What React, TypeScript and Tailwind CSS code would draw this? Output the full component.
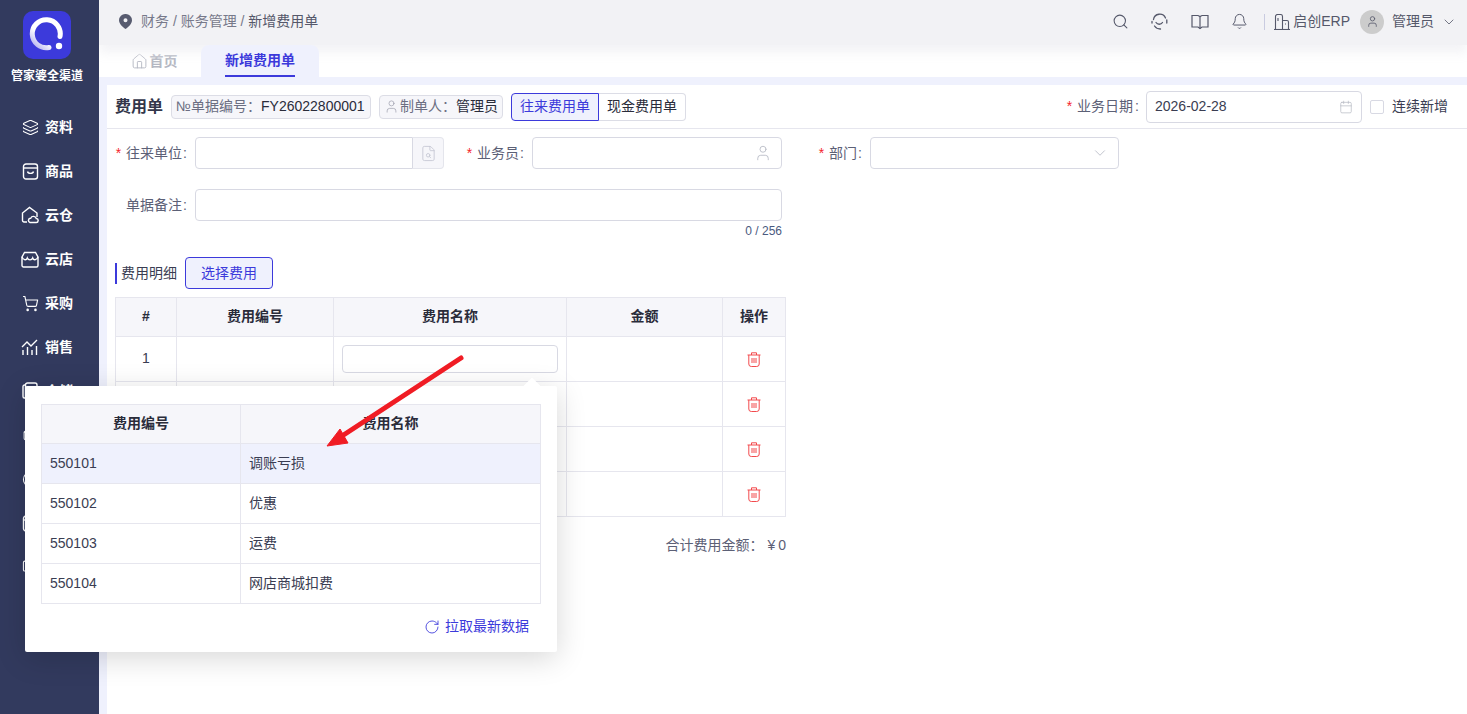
import { ChevronDown, Search, Bell, User, Home, Calendar, Layers, ShoppingCart, RotateCw, FileSearch, Monitor, Package, CircleDot } from "lucide-react";

const font = { fontFamily: '"Liberation Sans", "Noto Sans CJK SC", sans-serif' };

function ShopBag() {
  return (
    <svg width="17" height="17" viewBox="0 0 17 17" fill="none" stroke="currentColor" strokeWidth="1.4">
      <rect x="1.5" y="1" width="14" height="15" rx="2.5" />
      <path d="M1.5 5h14" />
      <path d="M5.5 8.5c.5 2.5 5.500 2.500 6 0" />
    </svg>
  );
}

function CloudHouse() {
  return (
    <svg width="18" height="18" viewBox="0 0 18 18" fill="none" stroke="currentColor" strokeWidth="1.4">
      <path d="M6 16H3a1.500 1.500 0 0 1-1.500-1.500V7L8.500 1.500 16 7v4" />
      <path d="M9 16.500h6a2 2 0 0 0 .3-4 3 3 0 0 0-5.600-.3 2.200 2.200 0 0 0-.7 4.300z" />
    </svg>
  );
}

function Store() {
  return (
    <svg width="18" height="17" viewBox="0 0 18 17" fill="none" stroke="currentColor" strokeWidth="1.4">
      <path d="M3.500 1.500h11L17 6v8.500a1.500 1.500 0 0 1-1.500 1.500h-13A1.500 1.500 0 0 1 1 14.500V6z" />
      <path d="M1 6c1.500 3.500 4.500 3.500 5.300 1 1 2.500 4.400 2.500 5.400 0 .8 2.500 3.800 2.500 5.300-1" />
    </svg>
  );
}

function Chart() {
  return (
    <svg width="18" height="17" viewBox="0 0 18 17" fill="none" stroke="currentColor" strokeWidth="1.4">
      <path d="M1 8l5-5 4 4 6-6" />
      <path d="M2 11v5M6.500 8v8M11 11v5M15.500 7v9" />
    </svg>
  );
}

function Ledger() {
  return (
    <svg width="16" height="18" viewBox="0 0 16 18" fill="none" stroke="currentColor" strokeWidth="1.4">
      <path d="M3 3H2.500A1.500 1.500 0 0 0 1 4.500v10A1.500 1.500 0 0 0 2.500 16H3" />
      <rect x="3.500" y="1" width="11.500" height="16" rx="2" />
      <path d="M3.500 5.500H15" />
    </svg>
  );
}

function Trash() {
  return (
    <svg width="14" height="15" viewBox="0 0 14 15" fill="none" stroke="#f24a4d" strokeWidth="1">
      <path d="M.5 3h13" />
      <path d="M4.500 3V.8h5V3" />
      <path d="M1.800 3v9a2.500 2.500 0 0 0 2.500 2.500h5.400a2.500 2.500 0 0 0 2.500-2.500V3" />
      <path d="M5 6v5M7 6v5M9 6v5" />
    </svg>
  );
}

function Pin() {
  return (
    <svg width="13" height="15" viewBox="0 0 13 15">
      <path fillRule="evenodd" fill="#585c70" d="M6.500 0A6.300 6.300 0 0 1 13 6.300c0 3.500-3.500 6.800-6.500 8.700C3.500 13.100 0 9.800 0 6.300A6.300 6.300 0 0 1 6.500 0zm0 4.300a2 2 0 1 0 0 4 2 2 0 0 0 0-4z" />
    </svg>
  );
}

function ServiceHead() {
  return (
    <svg width="17" height="17" viewBox="0 0 17 17" fill="none" stroke="currentColor" strokeWidth="1.3" strokeLinecap="round">
      <path d="M2.500 6.500A6.300 6.300 0 0 1 14.500 5" />
      <path d="M1 8.500v1.500M15.800 7v3" />
      <path d="M5 9.500c1.500 2.300 5 2.300 6.500 0" />
      <path d="M3.500 13a7 7 0 0 0 6 3" />
    </svg>
  );
}

function OpenBook() {
  return (
    <svg width="18" height="16" viewBox="0 0 18 16" fill="none" stroke="currentColor" strokeWidth="1.2">
      <path d="M1 1.500h6L9 2.500l2-1h6v11.500h-6L9 14.500 7 13H1z" />
      <path d="M9 2.500v12" />
    </svg>
  );
}

function Tower() {
  return (
    <svg width="16" height="16" viewBox="0 0 16 16" fill="none" stroke="currentColor" strokeWidth="1.1">
      <path d="M0 15.500h16" />
      <path d="M1.500 15.500V2.500a2 2 0 0 1 2-2h3a2 2 0 0 1 2 2v13" />
      <path d="M8.500 6.500H13a1.500 1.500 0 0 1 1.500 1.500v7.500" />
      <path d="M4 4v3M11 10h1" />
    </svg>
  );
}

function Logo() {
  return (
    <svg width="36" height="36" viewBox="0 0 36 36" fill="none">
      <defs>
        <linearGradient id="ring" x1="0" y1="1" x2="0.7" y2="0.2">
          <stop offset="0" stopColor="#a9a8ee" />
          <stop offset="0.5" stopColor="#ffffff" />
        </linearGradient>
      </defs>
      <path d="M20 30.500A14 14 0 1 1 31 19.500" stroke="url(#ring)" strokeWidth="5" strokeLinecap="round" />
      <circle cx="30" cy="29" r="3.200" fill="#fff" />
    </svg>
  );
}

const navItems = [
  { label: "资料", icon: <Layers size={17} strokeWidth={1.5} /> },
  { label: "商品", icon: <ShopBag /> },
  { label: "云仓", icon: <CloudHouse /> },
  { label: "云店", icon: <Store /> },
  { label: "采购", icon: <ShoppingCart size={17} strokeWidth={1.6} /> },
  { label: "销售", icon: <Chart /> },
  { label: "仓储", icon: <Ledger /> },
  { label: "生产", icon: <Package size={17} strokeWidth={1.5} /> },
  { label: "财务", icon: <CircleDot size={17} strokeWidth={1.5} /> },
  { label: "报表", icon: <ShopBag /> },
  { label: "系统", icon: <Monitor size={17} strokeWidth={1.5} /> },
];

const expenseRows = [
  ["550101", "调账亏损"],
  ["550102", "优惠"],
  ["550103", "运费"],
  ["550104", "网店商城扣费"],
];

function Label({ text, required, width }: { text: string; required?: boolean; width: string }) {
  return (
    <div className={`${width} h-[32px] shrink-0 flex items-center justify-end pr-[8px] text-[14px] text-[#5c6076]`}>
      {required && <span className="text-[#f5222d] mr-[5px]">*</span>}
      <span>{text}</span>
      <span className="ml-[1px]">:</span>
    </div>
  );
}

export default function App() {
  return (
    <div className="relative flex h-screen w-full overflow-hidden bg-white text-[14px] text-[#3a3d52]" style={font}>
      {/* sidebar */}
      <aside className="relative z-20 w-[99px] shrink-0 bg-[#323a5e] text-white flex flex-col">
        <div className="w-[94px] flex flex-col items-center">
          <div className="mt-[11px] w-[48px] h-[48px] rounded-[10px] bg-[#3c3adb] flex items-center justify-center">
            <Logo />
          </div>
          <div className="mt-[9px] text-[12px] font-bold leading-[16px] whitespace-nowrap">管家婆全渠道</div>
        </div>
        <nav className="mt-[21px] w-full flex flex-col">
          {navItems.map((item) => (
            <div key={item.label} className="h-[44px] flex items-center pl-[21px] gap-[6px] text-[14px] font-bold">
              <span className="w-[18px] flex justify-center">{item.icon}</span>
              <span>{item.label}</span>
            </div>
          ))}
        </nav>
      </aside>

      <div className="flex-1 min-w-0 flex flex-col">
        {/* top bar */}
        <header className="relative z-10 h-[45px] shrink-0 bg-[#f2f2f5] flex items-center pl-[20px] pr-[10px] pb-[2px] shadow-[0_8px_10px_rgba(242,242,245,0.9)]">
          <Pin />
          <span className="ml-[9px] text-[#77798a]">财务 / 账务管理 /&nbsp;</span>
          <span className="text-[#55586a]">新增费用单</span>
          <div className="ml-auto flex items-center text-[#55586a]">
            <Search size={17} strokeWidth={1.5} />
            <span className="ml-[22px]"><ServiceHead /></span>
            <span className="ml-[23px]"><OpenBook /></span>
            <Bell size={17} strokeWidth={1.4} className="ml-[22px]" />
            <div className="ml-[16px] w-px h-[16px] bg-[#c9cbe0]" />
            <span className="ml-[9px]"><Tower /></span>
            <span className="ml-[3px]">启创ERP</span>
            <div className="ml-[10px] w-[24px] h-[24px] rounded-full bg-[#cccccc] flex items-center justify-center">
              <User size={13} strokeWidth={1.5} />
            </div>
            <span className="ml-[8px]">管理员</span>
            <ChevronDown size={16} strokeWidth={1.2} className="ml-[7px]" />
          </div>
        </header>

        {/* tabs */}
        <div className="h-[32px] shrink-0 flex items-stretch pl-[8px]">
          <div className="w-[94px] flex items-center justify-center gap-[2px] font-bold text-[#b4b7c2]">
            <Home size={17} strokeWidth={1.3} />
            <span>首页</span>
          </div>
          <div className="relative z-20 w-[118px] bg-[#eff1fd] rounded-t-[8px] flex justify-center">
            <div className="w-[70px] h-full flex items-center justify-center font-bold text-[#3c3adb] border-b-2 border-[#3c3adb] whitespace-nowrap">新增费用单</div>
          </div>
        </div>

        {/* page */}
        <main className="flex-1 min-h-0 bg-[#eff1fd] pl-[8px] pt-[8px]">
          <div className="h-full bg-white">
            <div className="h-[44px] flex items-center pl-[8px] pr-[19px] border-b border-[#e6e6ee]">
              <span className="w-[56px] text-[16px] font-bold text-[#33364a]">费用单</span>
              <div className="w-[200px] h-[24px] flex items-center pl-[4px] rounded-[4px] border border-[#dcdde6] bg-[#f6f6fa] whitespace-nowrap text-[#6b6e82]">
                <span className="text-[14px]">№</span>
                <span>单据编号：</span>
                <span className="text-[#2a2c3a]">FY26022800001</span>
              </div>
              <div className="ml-[8px] w-[124px] h-[24px] flex items-center pl-[4px] rounded-[4px] border border-[#dcdde6] bg-[#f6f6fa] whitespace-nowrap text-[#6b6e82]">
                <User size={15} strokeWidth={1.1} className="text-[#9a9caa]" />
                <span className="ml-[1px]">制单人：</span>
                <span className="text-[#2a2c3a]">管理员</span>
              </div>
              <div className="ml-[8px] flex h-[28px]">
                <div className="w-[88px] flex items-center justify-center rounded-l-[4px] border border-[#3c3adb] bg-[#eff1fd] text-[#3c3adb]">往来费用单</div>
                <div className="w-[87px] flex items-center justify-center rounded-r-[4px] border border-l-0 border-[#dcdde6] text-[#2a2c3a]">现金费用单</div>
              </div>
              <div className="ml-auto flex items-center">
                <span className="text-[#f5222d] mr-[5px]">*</span>
                <span className="text-[#5c6076]">业务日期</span>
                <span className="ml-[2px] text-[#5c6076]">:</span>
                <div className="ml-[7px] w-[216px] h-[32px] flex items-center justify-between pl-[8px] pr-[8px] rounded-[4px] border border-[#d8d9e3]">
                  <span className="text-[#3a3d52]">2026-02-28</span>
                  <Calendar size={14} strokeWidth={1.2} className="text-[#b4b7c2]" />
                </div>
                <div className="ml-[8px] w-[14px] h-[14px] rounded-[2px] border border-[#d8d9e3]" />
                <span className="ml-[8px]">连续新增</span>
              </div>
            </div>

            <div className="pl-[8px] pt-[8px]">
              <div className="flex">
                <Label text="往来单位" required width="w-[80px]" />
                <div className="w-[218px] h-[32px] rounded-l-[4px] border border-[#d8d9e3]" />
                <div className="w-[31px] h-[32px] flex items-center justify-center rounded-r-[4px] border border-l-0 border-[#e4e5ec] bg-[#f6f6fa]">
                  <FileSearch size={17} strokeWidth={1.2} className="text-[#c4c6d2]" />
                </div>
                <div className="ml-[16px] flex">
                  <Label text="业务员" required width="w-[72px]" />
                  <div className="w-[250px] h-[32px] flex items-center justify-end pr-[9px] rounded-[4px] border border-[#d8d9e3]">
                    <User size={18} strokeWidth={1.1} className="text-[#b4b7c2]" />
                  </div>
                </div>
                <div className="ml-[16px] flex">
                  <Label text="部门" required width="w-[72px]" />
                  <div className="w-[249px] h-[32px] flex items-center justify-end pr-[9px] rounded-[4px] border border-[#d8d9e3]">
                    <ChevronDown size={18} strokeWidth={1.1} className="text-[#b4b7c2]" />
                  </div>
                </div>
              </div>

              <div className="mt-[20px] flex">
                <Label text="单据备注" width="w-[80px]" />
                <div className="w-[587px]">
                  <div className="h-[32px] rounded-[4px] border border-[#d8d9e3]" />
                  <div className="mt-[2px] text-right text-[12px] leading-[16px] text-[#4a5a80]">0 / 256</div>
                </div>
              </div>

              <div className="mt-[18px] flex items-center h-[32px]">
                <div className="w-[2px] h-[21px] bg-[#3c3adb]" />
                <span className="ml-[4px]">费用明细</span>
                <button className="ml-[8px] w-[88px] h-[32px] rounded-[4px] border border-[#3c3adb] bg-[#eff1fd] text-[#3c3adb]">选择费用</button>
              </div>

              <table className="mt-[8px] w-[671px] table-fixed border-collapse">
                <thead>
                  <tr className="h-[39px] bg-[#f6f6fa] font-bold text-[#2a2c3a]">
                    <th className="w-[61px] border border-[#e6e6ee] pb-[2px]">#</th>
                    <th className="w-[157px] border border-[#e6e6ee] pb-[2px]">费用编号</th>
                    <th className="w-[233px] border border-[#e6e6ee] pb-[2px]">费用名称</th>
                    <th className="w-[156px] border border-[#e6e6ee] pb-[2px]">金额</th>
                    <th className="border border-[#e6e6ee] pb-[2px]">操作</th>
                  </tr>
                </thead>
                <tbody>
                  {[1, 2, 3, 4].map((n) => (
                    <tr key={n} className="h-[45px]">
                      <td className="border border-[#e6e6ee] text-center pb-[2px]">{n}</td>
                      <td className="border border-[#e6e6ee]" />
                      <td className="border border-[#e6e6ee] px-[8px]">
                        {n === 1 && <div className="h-[28px] rounded-[4px] border border-[#d8d9e3]" />}
                      </td>
                      <td className="border border-[#e6e6ee]" />
                      <td className="border border-[#e6e6ee]">
                        <div className="flex justify-center"><Trash /></div>
                      </td>
                    </tr>
                  ))}
                </tbody>
              </table>

              <div className="w-[671px] mt-[18px] text-right text-[#5c6076]">
                合计费用金额：
                <span className="ml-[4px]">¥</span>
                <span className="ml-[3px]">0</span>
              </div>
            </div>
          </div>
        </main>
      </div>

      {/* popover over the first row's input */}
      <div className="absolute z-30 left-[25px] top-[386px] w-[532px] h-[266px] bg-white rounded-[2px] shadow-[0_6px_30px_rgba(0,0,0,0.16)] pl-[16px] pt-[18px]">
        <div className="absolute right-[19px] -top-[6px] w-[12px] h-[12px] bg-white rotate-45" />
        <table className="relative w-[500px] table-fixed border-collapse">
          <thead>
            <tr className="h-[39px] bg-[#f6f6fa] font-bold text-[#2a2c3a]">
              <th className="w-[199px] border border-[#e6e6ee] pb-[2px]">费用编号</th>
              <th className="border border-[#e6e6ee] pb-[2px]">费用名称</th>
            </tr>
          </thead>
          <tbody>
            {expenseRows.map((row, i) => (
              <tr key={row[0]} className={`h-[40px] ${i === 0 ? "bg-[#eff1fd]" : ""}`}>
                <td className="border border-[#e6e6ee] px-[8px]">{row[0]}</td>
                <td className="border border-[#e6e6ee] px-[8px]">{row[1]}</td>
              </tr>
            ))}
          </tbody>
        </table>
        <div className="mt-[12px] w-[488px] flex items-center justify-end gap-[5px] text-[#3c3adb]">
          <RotateCw size={16} strokeWidth={1.3} />
          <span>拉取最新数据</span>
        </div>
      </div>

      {/* red annotation arrow */}
      <svg className="absolute z-40 left-0 top-0 pointer-events-none" width="1467" height="714" fill="none">
        <path d="M461 358L342 436" stroke="#f01c24" strokeWidth="5" strokeLinecap="round" />
        <path d="M327 446L340 429L348 443Z" fill="#f01c24" stroke="#f01c24" strokeWidth="1" strokeLinejoin="round" />
      </svg>
    </div>
  );
}
